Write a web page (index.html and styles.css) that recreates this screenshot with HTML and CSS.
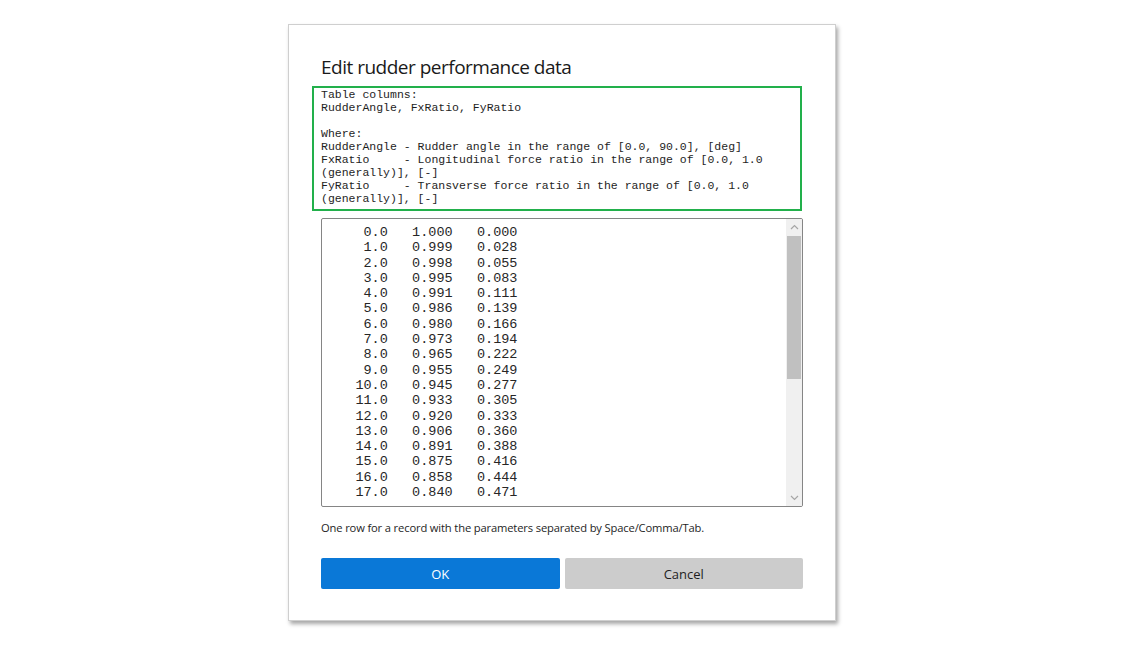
FILE: index.html
```html
<!DOCTYPE html>
<html>
<head>
<meta charset="utf-8">
<link rel="stylesheet" href="styles.css">
</head>
<body>
<div class="dialog">
  <h1 class="title">Edit rudder performance data</h1>
  <div class="info">
<pre class="info-text">Table columns:
RudderAngle, FxRatio, FyRatio

Where:
RudderAngle - Rudder angle in the range of [0.0, 90.0], [deg]
FxRatio     - Longitudinal force ratio in the range of [0.0, 1.0
(generally)], [-]
FyRatio     - Transverse force ratio in the range of [0.0, 1.0
(generally)], [-]</pre>
  </div>
  <div class="editor">
<pre class="data">     0.0   1.000   0.000
     1.0   0.999   0.028
     2.0   0.998   0.055
     3.0   0.995   0.083
     4.0   0.991   0.111
     5.0   0.986   0.139
     6.0   0.980   0.166
     7.0   0.973   0.194
     8.0   0.965   0.222
     9.0   0.955   0.249
    10.0   0.945   0.277
    11.0   0.933   0.305
    12.0   0.920   0.333
    13.0   0.906   0.360
    14.0   0.891   0.388
    15.0   0.875   0.416
    16.0   0.858   0.444
    17.0   0.840   0.471</pre>
    <div class="scrollbar">
      <div class="sb-btn">
        <svg width="9" height="6" viewBox="0 0 9 6"><path d="M1 5 L4.5 1.5 L8 5" fill="none" stroke="#a6a6a6" stroke-width="1.2"/></svg>
      </div>
      <div class="sb-track">
        <div class="sb-thumb"></div>
      </div>
      <div class="sb-btn">
        <svg width="9" height="6" viewBox="0 0 9 6"><path d="M1 1 L4.5 4.5 L8 1" fill="none" stroke="#a6a6a6" stroke-width="1.2"/></svg>
      </div>
    </div>
  </div>
  <p class="hint">One row for a record with the parameters separated by Space/Comma/Tab.</p>
  <div class="buttons">
    <button class="btn btn-ok">OK</button>
    <button class="btn btn-cancel">Cancel</button>
  </div>
</div>
</body>
</html>
```

FILE: styles.css
```css
html, body {
  margin: 0;
  padding: 0;
  background: #ffffff;
}
body {
  width: 1123px;
  height: 654px;
  overflow: hidden;
  padding-top: 24px;
  box-sizing: border-box;
  font-family: "Open Sans", "Noto Sans", sans-serif;
}
.dialog {
  width: 548px;
  height: 597px;
  box-sizing: border-box;
  margin: 0 0 0 288px;
  border: 1px solid #cfcfcf;
  background: #fff;
  box-shadow: 2px 3px 4px rgba(0, 0, 0, 0.35);
  padding: 28px 32px 0 32px;
  display: flex;
  flex-direction: column;
}
.title {
  margin: 0;
  font-size: 19px;
  font-weight: 400;
  line-height: 28px;
  color: #1a1a1a;
  letter-spacing: -0.5px;
}
.info {
  margin: 5px 0 0 -9px;
  width: 490px;
  height: 125px;
  box-sizing: border-box;
  border: 2px solid #22b04b;
  padding: 0 0 0 7px;
}
.info-text {
  margin: 0;
  font-family: "Liberation Mono", "Courier New", monospace;
  font-size: 11.5px;
  line-height: 13px;
  color: #1e1e1e;
  white-space: pre;
}
.editor {
  margin-top: 7px;
  height: 289px;
  box-sizing: border-box;
  border: 1px solid #858585;
  border-radius: 2px;
  display: flex;
  overflow: hidden;
}
.data {
  flex: 1;
  margin: 0;
  padding: 6px 0 0 1px;
  font-family: "Liberation Mono", "Courier New", monospace;
  font-size: 13.5px;
  line-height: 15.3px;
  color: #262626;
  white-space: pre;
  overflow: hidden;
}
.scrollbar {
  width: 16px;
  background: #f0f0f0;
  display: flex;
  flex-direction: column;
}
.sb-btn {
  height: 16px;
  display: flex;
  align-items: center;
  justify-content: center;
}
.sb-track {
  flex: 1;
  display: flex;
  flex-direction: column;
}
.sb-thumb {
  margin-top: 1px;
  height: 143px;
  background: #c0c0c0;
  margin-left: 1px;
  margin-right: 1px;
}
.hint {
  margin: 13px 0 0 0;
  font-size: 11.2px;
  line-height: 16px;
  color: #1e1e1e;
  letter-spacing: -0.15px;
}
.buttons {
  margin-top: 22px;
  display: flex;
  gap: 5px;
}
.btn {
  flex: 1;
  height: 31px;
  border: none;
  border-radius: 2px;
  font-family: "Open Sans", "Noto Sans", sans-serif;
  font-size: 13px;
  padding: 0;
}
.btn-ok {
  background: #0a78d7;
  color: #ffffff;
}
.btn-cancel {
  background: #cccccc;
  color: #1e1e1e;
}
```
